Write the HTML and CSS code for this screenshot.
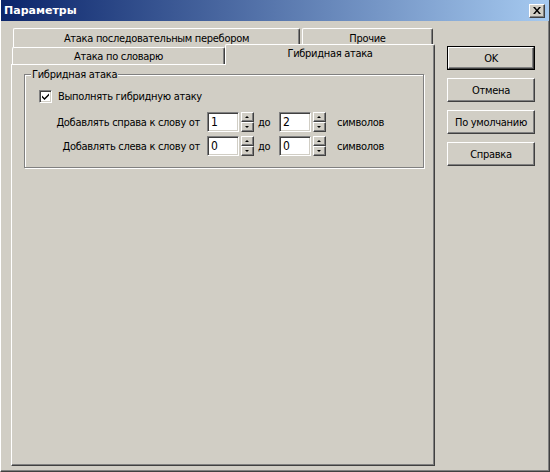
FILE: index.html
```html
<!DOCTYPE html>
<html lang="ru">
<head>
<meta charset="utf-8">
<title>Параметры</title>
<link rel="stylesheet" href="styles.css">
</head>
<body>
<div class="window">
  <div class="titlebar">
    <span class="title">Параметры</span>
    <span class="close">
      <svg width="8" height="7" viewBox="0 0 8 7"><path d="M0 0h2l2 2.5L6 0h2L5 3.5 8 7H6L4 4.5 2 7H0l3-3.5z" fill="#000"/></svg>
    </span>
  </div>
  <div class="body">
    <div class="tabctl">
      <div class="tabrow back">
        <div class="tab t1">Атака последовательным перебором</div>
        <div class="tab t2">Прочие</div>
      </div>
      <div class="tabrow front">
        <div class="tab t3">Атака по словарю</div>
        <div class="tab sel">Гибридная атака</div>
      </div>
      <div class="panel">
        <fieldset class="group">
          <legend>Гибридная атака</legend>
          <div class="checkrow">
            <span class="checkbox">
              <svg width="7" height="7" viewBox="0 0 7 7"><path d="M0 2.5l2.5 2.5L7 0.5V2.5L2.5 7L0 4.5z" fill="#000"/></svg>
            </span>
            <span class="checklabel">Выполнять гибридную атаку</span>
          </div>
          <div class="spinrow r1">
            <span class="lbl">Добавлять справа к слову от</span>
            <span class="edit">1</span>
            <span class="spin"><span class="sb up"></span><span class="sb down"></span></span>
            <span class="do">до</span>
            <span class="edit">2</span>
            <span class="spin"><span class="sb up"></span><span class="sb down"></span></span>
            <span class="sym">символов</span>
          </div>
          <div class="spinrow r2">
            <span class="lbl">Добавлять слева к слову от</span>
            <span class="edit">0</span>
            <span class="spin"><span class="sb up"></span><span class="sb down"></span></span>
            <span class="do">до</span>
            <span class="edit">0</span>
            <span class="spin"><span class="sb up"></span><span class="sb down"></span></span>
            <span class="sym">символов</span>
          </div>
        </fieldset>
      </div>
    </div>
    <div class="buttons">
      <div class="btn default"><span class="btn-in">OK</span></div>
      <div class="btn"><span class="btn-in">Отмена</span></div>
      <div class="btn"><span class="btn-in">По умолчанию</span></div>
      <div class="btn"><span class="btn-in">Справка</span></div>
    </div>
  </div>
</div>
</body>
</html>
```

FILE: styles.css
```css
* { box-sizing: border-box; }
html, body { margin: 0; padding: 0; }
body {
  width: 550px;
  height: 472px;
  overflow: hidden;
  background: #d1cec5;
  font-family: "DejaVu Sans Condensed", "Liberation Sans", sans-serif;
  font-size: 11px;
  letter-spacing: -0.3px;
  color: #000;
}
.window {
  width: 550px;
  height: 472px;
  background: #d1cec5;
  border-left: 1px solid #fff;
  border-right: 1px solid #404040;
  border-bottom: 1px solid #404040;
  box-shadow: inset -1px -1px 0 #808080;
}
.titlebar {
  height: 21px;
  display: flex;
  align-items: center;
  justify-content: space-between;
  background: linear-gradient(to right, #0a246a, #a6caf0);
  padding: 0 4px 0 3px;
}
.title {
  color: #fff;
  font-family: "DejaVu Sans", "Liberation Sans", sans-serif;
  font-weight: bold;
  font-size: 11px;
  letter-spacing: 0;
  line-height: 20px;
}
.close {
  width: 16px;
  height: 14px;
  background: #d1cec5;
  border-top: 1px solid #fff;
  border-left: 1px solid #fff;
  border-right: 1px solid #404040;
  border-bottom: 1px solid #404040;
  box-shadow: inset -1px -1px 0 #808080;
  display: flex;
  align-items: center;
  justify-content: center;
  margin-top: 1px;
}
.close svg { display: block; margin: 0 1px 1px 0; }
.body {
  display: flex;
  padding: 7px 0 0 10px;
}
.tabctl {
  width: 424px;
}
.tabrow {
  display: flex;
}
.tabrow.back {
  height: 19px;
  padding-left: 2px;
  gap: 2px;
}
.tabrow.front {
  height: 17px;
  padding-left: 1px;
}
.tab {
  text-align: center;
  background: #d1cec5;
  border-top: 1px solid #fff;
  border-left: 1px solid #fff;
  border-right: 1px solid #404040;
  border-radius: 2px 2px 0 0;
  box-shadow: inset -1px 0 0 #808080;
  white-space: nowrap;
}
.t1 { width: 287px; line-height: 19px; }
.t2 { width: 131px; line-height: 19px; }
.t3 { width: 213px; height: 17px; line-height: 17px; }
.sel {
  width: 210px;
  height: 21px;
  margin-top: -3px;
  line-height: 18px;
  position: relative;
  z-index: 1;
}
.panel {
  height: 402px;
  border-top: 1px solid #fff;
  border-left: 1px solid #fff;
  border-right: 1px solid #404040;
  border-bottom: 1px solid #404040;
  box-shadow: inset -1px -1px 0 #808080;
  padding: 3px 0 0 12px;
}
.group {
  width: 400px;
  margin: 0;
  padding: 0 0 11px 0;
  border: 1px solid #808080;
  box-shadow: inset 1px 1px 0 #fff, 1px 1px 0 #fff;
  min-width: 0;
}
.group legend {
  margin-left: 6px;
  padding: 0 1px;
  line-height: 13px;
  background: #d1cec5;
}
.checkrow {
  display: flex;
  align-items: center;
  height: 13px;
  margin-top: 9px;
  padding-left: 14px;
}
.checkbox {
  width: 13px;
  height: 13px;
  background: #fff;
  border-top: 1px solid #808080;
  border-left: 1px solid #808080;
  border-right: 1px solid #fff;
  border-bottom: 1px solid #fff;
  box-shadow: inset 1px 1px 0 #404040, inset -1px -1px 0 #d1cec5;
  display: flex;
  align-items: center;
  justify-content: center;
}
.checkbox svg { display: block; }
.checklabel { margin-left: 6px; line-height: 13px; }
.spinrow {
  display: flex;
  align-items: center;
  height: 20px;
}
.spinrow.r1 { margin-top: 9px; }
.spinrow.r2 { margin-top: 4px; }
.lbl {
  width: 175px;
  text-align: right;
  margin-right: 7px;
  white-space: nowrap;
}
.edit {
  width: 32px;
  height: 20px;
  background: #fff;
  border-top: 1px solid #808080;
  border-left: 1px solid #808080;
  border-right: 1px solid #fff;
  border-bottom: 1px solid #fff;
  box-shadow: inset 1px 1px 0 #404040, inset -1px -1px 0 #d1cec5;
  padding-left: 3px;
  line-height: 18px;
  font-size: 12px;
  letter-spacing: 0;
}
.spin {
  display: flex;
  flex-direction: column;
  margin-left: 2px;
  width: 13px;
  height: 20px;
}
.sb {
  height: 10px;
  background: #d1cec5;
  border-top: 1px solid #fff;
  border-left: 1px solid #fff;
  border-right: 1px solid #404040;
  border-bottom: 1px solid #404040;
  box-shadow: inset -1px -1px 0 #808080;
  display: flex;
  align-items: center;
  justify-content: center;
}
.sb::after {
  content: "";
  width: 0;
  height: 0;
  border-left: 2px solid transparent;
  border-right: 2px solid transparent;
  margin-right: 1px;
}
.sb.up::after { border-bottom: 2px solid #000; }
.sb.down::after { border-top: 2px solid #000; }
.do {
  width: 21px;
  margin-left: 4px;
}
.sym { margin-left: 11px; }
.buttons {
  margin-left: 12px;
  margin-top: 18px;
  display: flex;
  flex-direction: column;
  gap: 8px;
  width: 88px;
}
.btn {
  height: 24px;
  background: #d1cec5;
  border-top: 1px solid #fff;
  border-left: 1px solid #fff;
  border-right: 1px solid #404040;
  border-bottom: 1px solid #404040;
  box-shadow: inset -1px -1px 0 #808080;
  display: flex;
}
.btn-in {
  flex: 1;
  display: flex;
  align-items: center;
  justify-content: center;
  white-space: nowrap;
}
.btn.default {
  border: 1px solid #000;
  box-shadow: none;
}
.btn.default .btn-in {
  border-top: 1px solid #fff;
  border-left: 1px solid #fff;
  border-right: 1px solid #404040;
  border-bottom: 1px solid #404040;
  box-shadow: inset -1px -1px 0 #808080;
}
```
